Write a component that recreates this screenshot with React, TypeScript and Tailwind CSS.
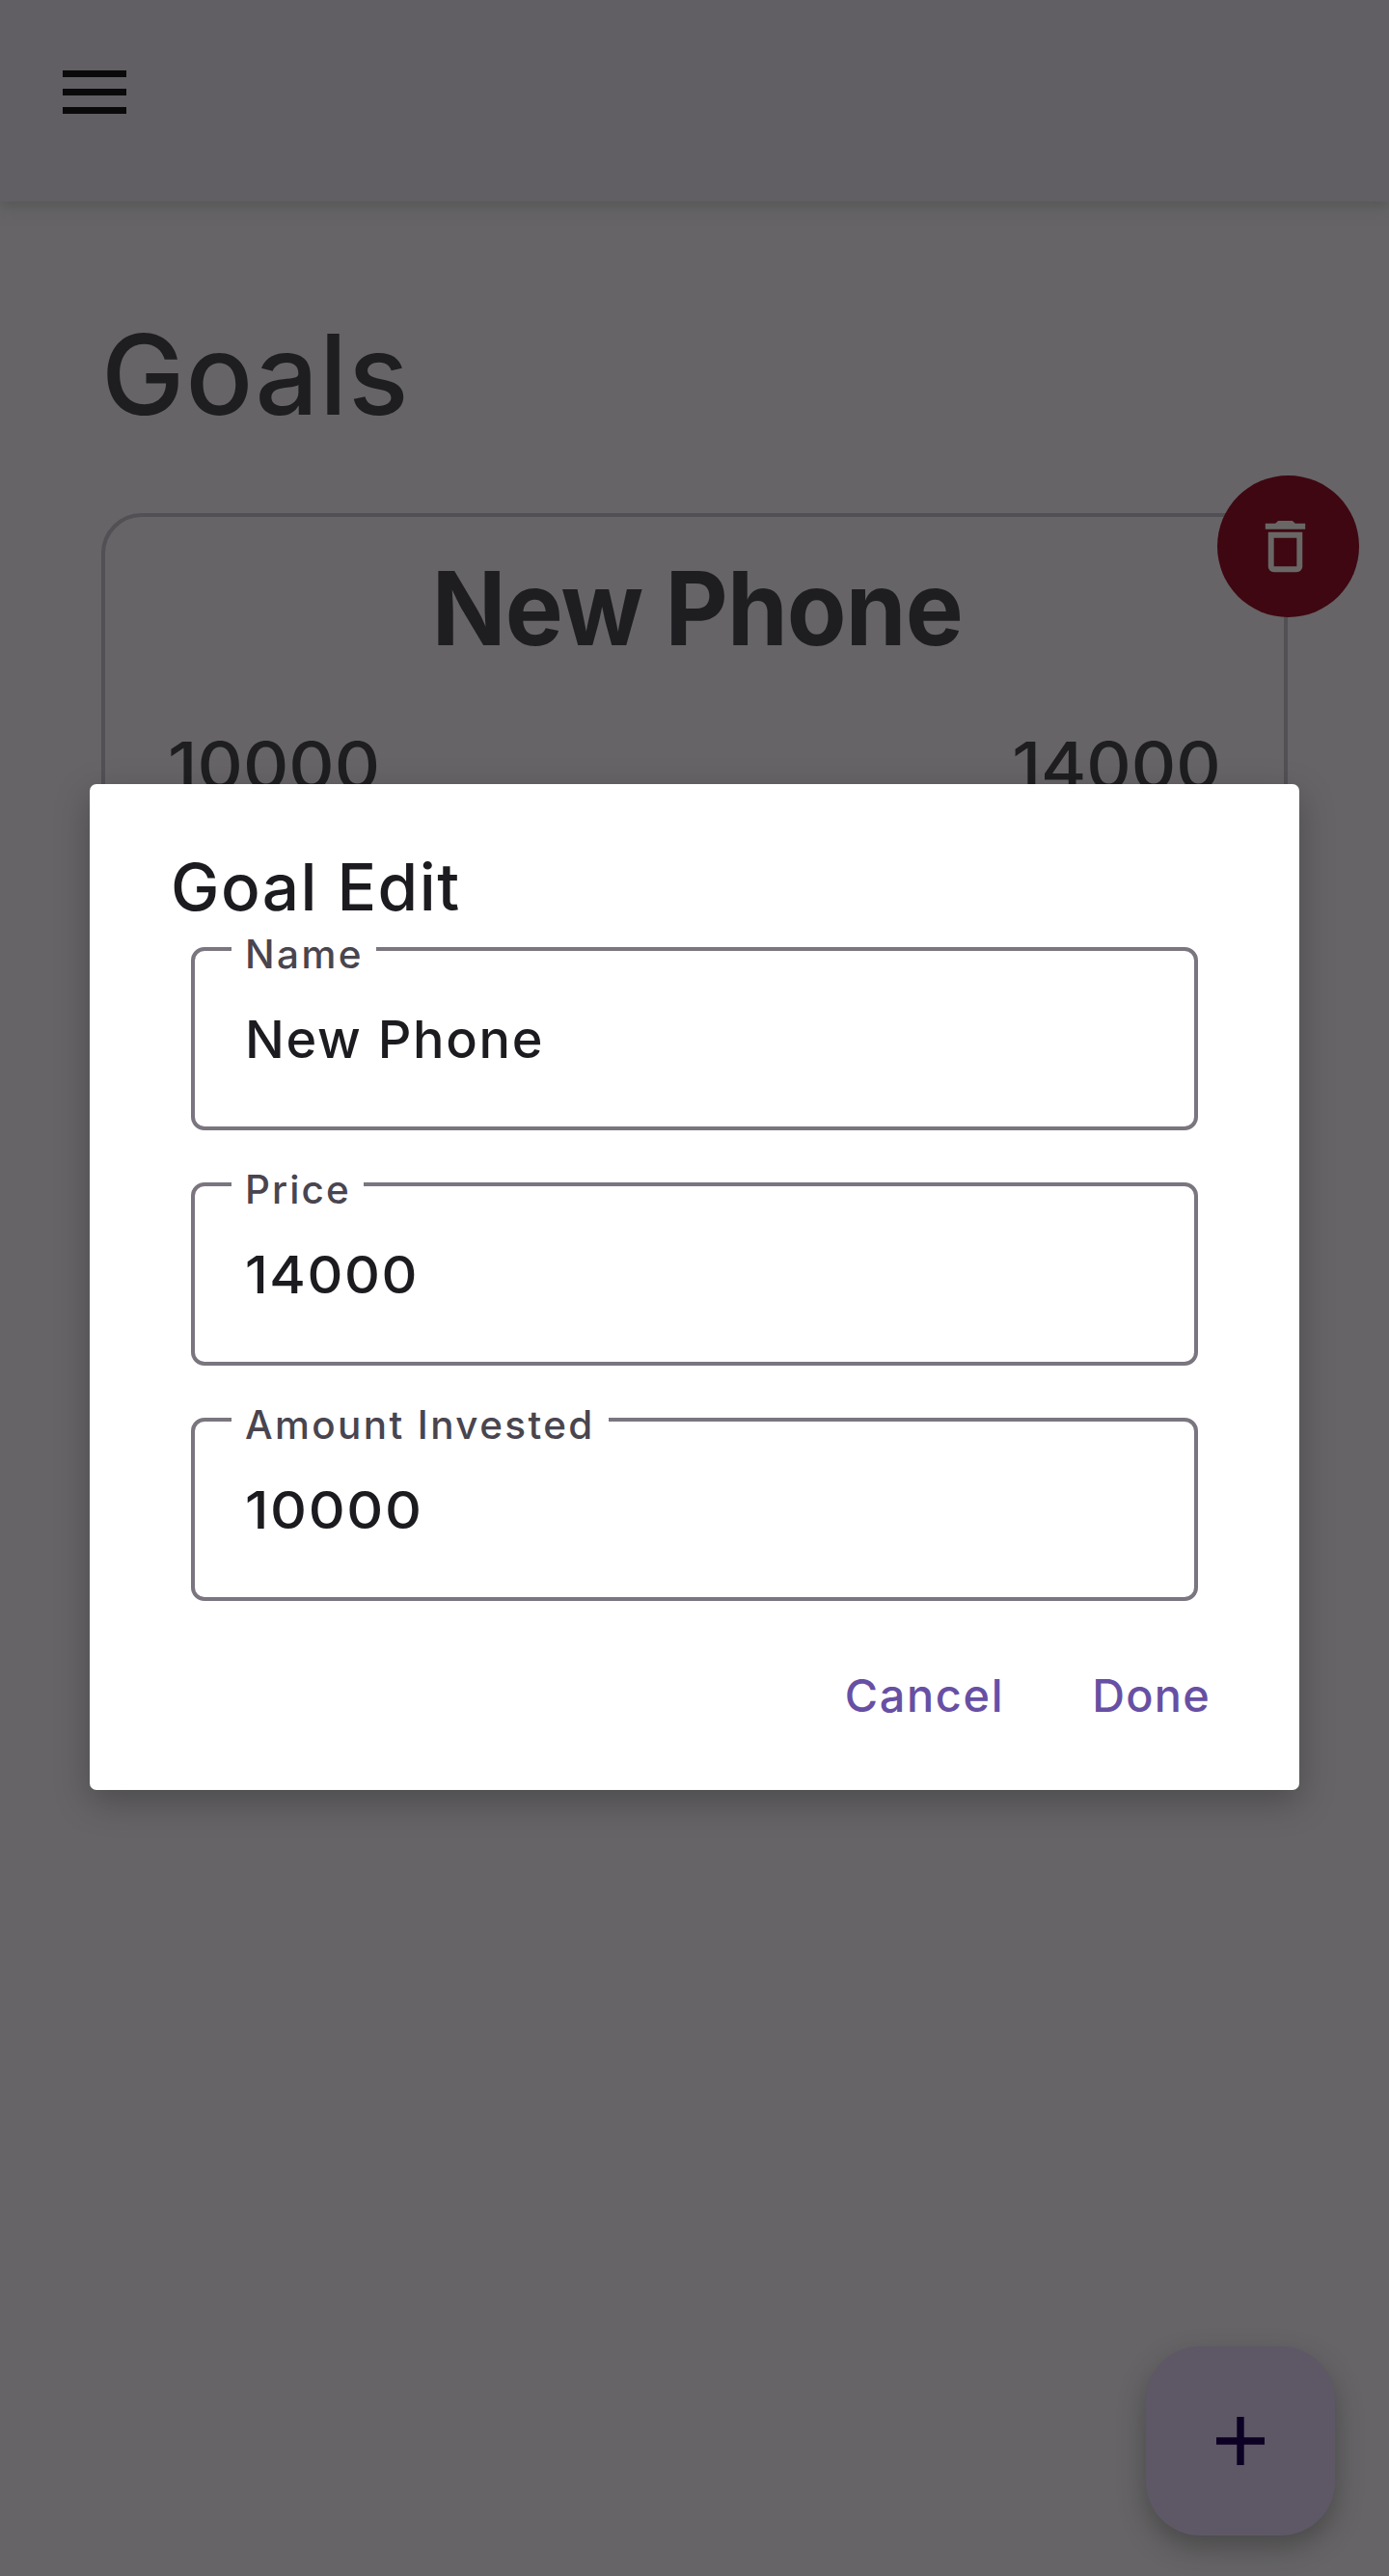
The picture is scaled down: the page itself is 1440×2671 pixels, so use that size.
type FieldProps = {
  label: string;
  value: string;
  labelClass: string;
  valueClass: string;
};

const fields: FieldProps[] = [
  {
    label: "Name",
    value: "New Phone",
    labelClass: "w-[150px] tracking-[2.5px]",
    valueClass: "tracking-[1.7px]",
  },
  {
    label: "Price",
    value: "14000",
    labelClass: "w-[137px] tracking-[2.1px]",
    valueClass: "tracking-[1.5px] scale-x-[1.06]",
  },
  {
    label: "Amount Invested",
    value: "10000",
    labelClass: "w-[391px] tracking-[2.4px]",
    valueClass: "tracking-[1.5px] scale-x-[1.09]",
  },
];

function OutlinedField({ label, value, labelClass, valueClass }: FieldProps) {
  return (
    <div className="relative h-[190px] rounded-[14px] border-4 border-[#7a757f] pl-[52px] pt-[59px]">
      <span
        className={`absolute -top-[21px] left-[38px] whitespace-nowrap bg-white pl-[14px] text-[40.4px] leading-[50px] text-[#49454f] ${labelClass}`}
      >
        {label}
      </span>
      <span
        className={`inline-block origin-left whitespace-nowrap text-[54px] leading-[66px] text-[#1c1b1f] ${valueClass}`}
      >
        {value}
      </span>
    </div>
  );
}

function TopBar() {
  return (
    <header className="relative flex h-[209px] shrink-0 items-start bg-[#615f64] pl-[65px] pt-[73px] shadow-[0_4px_14px_rgba(70,72,64,0.55)]">
      <button aria-label="Menu" className="flex w-[66px] flex-col gap-3">
        <span className="h-[7px] w-full bg-[#0a0a0a]" />
        <span className="h-[7px] w-full bg-[#0a0a0a]" />
        <span className="h-[7px] w-full bg-[#0a0a0a]" />
      </button>
    </header>
  );
}

function GoalCard() {
  return (
    <section className="relative h-[430px] rounded-[42px] border-4 border-[#525055] px-[65px] pt-[31px]">
      <h2 className="scale-x-95 whitespace-nowrap pl-[6px] text-center text-[106px] font-bold leading-[128px] tracking-[-0.8px]">
        New Phone
      </h2>
      <div className="mt-[58px] flex justify-between text-[67.4px] leading-[82px]">
        <span className="inline-block origin-left scale-x-[1.09]">10000</span>
        <span className="inline-block origin-right scale-x-[1.068]">14000</span>
      </div>
      <button
        aria-label="Delete"
        className="absolute -right-[78px] -top-[43px] flex h-[147px] w-[147px] items-start rounded-full bg-[#3f0711] pl-[34.5px] pt-[37.5px]"
      >
        <svg viewBox="0 0 24 24" className="h-[71px] w-[71px] shrink-0 fill-[#696766]">
          <path d="M6 19c0 1.1.9 2 2 2h8c1.1 0 2-.9 2-2V7H6v12zM8 9h8v10H8V9zm7.5-5l-1-1h-5l-1 1H5v2h14V4h-3.5z" />
        </svg>
      </button>
    </section>
  );
}

function GoalDialog() {
  return (
    <div className="absolute inset-0 flex items-center justify-center pb-[2px]">
      <div
        role="dialog"
        className="flex h-[1043px] w-[1254px] flex-col rounded-[7px] bg-white pt-[66px] text-[#1c1b1f] shadow-[0_12px_36px_rgba(0,0,0,0.26)]"
      >
        <h3 className="pl-[84px] text-[67.4px] leading-[82px] tracking-[1.5px]">Goal Edit</h3>
        <div className="ml-[105px] mt-[21px] flex w-[1044px] flex-col gap-[54px]">
          {fields.map((field) => (
            <OutlinedField key={field.label} {...field} />
          ))}
        </div>
        <div className="mt-[68px] flex justify-end gap-[91px] pr-[92px] text-[46.8px] leading-[60px] text-[#6750a4]">
          <button className="tracking-[1.7px]">Cancel</button>
          <button className="tracking-[1.27px]">Done</button>
        </div>
      </div>
    </div>
  );
}

export default function App() {
  return (
    <div className="relative flex h-[2671px] w-[1440px] flex-col overflow-hidden bg-[#666467] font-['Inter',sans-serif] font-medium text-[#1e1d20]">
      <TopBar />
      <main className="flex-1 px-[105px] pt-[109px]">
        <h1 className="mb-[74px] text-[115.5px] leading-[140px] tracking-[1.1px]">Goals</h1>
        <GoalCard />
      </main>
      <button
        aria-label="Add goal"
        className="absolute bottom-[42px] right-[56px] flex h-[196px] w-[196px] items-center justify-center rounded-[56px] bg-[#5e5866] shadow-[0_12px_28px_rgba(40,42,36,0.45)]"
      >
        <svg viewBox="0 0 50 50" className="h-[50px] w-[50px] fill-[#0c0024]">
          <path d="M21.3 0h7.4v21.3H50v7.4H28.7V50h-7.4V28.7H0v-7.4h21.3z" />
        </svg>
      </button>
      <GoalDialog />
    </div>
  );
}
